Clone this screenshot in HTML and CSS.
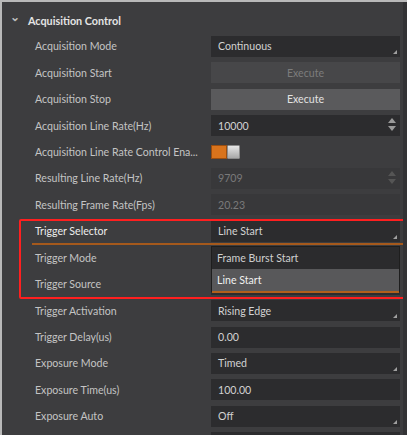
FILE: index.html
```
<!DOCTYPE html>
<html>
<head>
<meta charset="utf-8">
<link rel="stylesheet" href="styles.css">
</head>
<body>
<div class="panel">
  <div class="header"><span class="chev">&#8964;</span><span class="htext">Acquisition Control</span></div>
  <div class="rows">
    <div class="row"><span class="label">Acquisition Mode</span><div class="box combo">Continuous<span class="tri"></span></div></div>
    <div class="row"><span class="label">Acquisition Start</span><div class="btn disabled">Execute</div></div>
    <div class="row"><span class="label">Acquisition Stop</span><div class="btn">Execute</div></div>
    <div class="row"><span class="label">Acquisition Line Rate(Hz)</span><div class="box spin">10000<span class="arrows"><span class="up"></span><span class="down"></span></span></div></div>
    <div class="row"><span class="label">Acquisition Line Rate Control Ena...</span><div class="toggle"><span class="on"></span><span class="knob"></span></div></div>
    <div class="row"><span class="label">Resulting Line Rate(Hz)</span><div class="box spin dim">9709<span class="arrows"><span class="up"></span><span class="down"></span></span></div></div>
    <div class="row"><span class="label">Resulting Frame Rate(Fps)</span><div class="box dim">20.23</div></div>
    <div class="row selected"><span class="label">Trigger Selector</span><div class="box combo">Line Start<span class="tri"></span></div></div>
    <div class="row"><span class="label">Trigger Mode</span><div class="box combo"><span class="tri"></span></div></div>
    <div class="row"><span class="label">Trigger Source</span><div class="box combo"><span class="tri"></span></div></div>
    <div class="row"><span class="label">Trigger Activation</span><div class="box combo">Rising Edge<span class="tri"></span></div></div>
    <div class="row"><span class="label">Trigger Delay(us)</span><div class="box">0.00</div></div>
    <div class="row"><span class="label">Exposure Mode</span><div class="box combo">Timed<span class="tri"></span></div></div>
    <div class="row"><span class="label">Exposure Time(us)</span><div class="box">100.00</div></div>
    <div class="row"><span class="label">Exposure Auto</span><div class="box combo">Off<span class="tri"></span></div></div>
    <div class="row"><span class="label"></span><div class="box"></div></div>
  </div>
  <div class="dropdown">
    <div class="item">Frame Burst Start</div>
    <div class="item active">Line Start</div>
  </div>
  <div class="highlight"></div>
  <div class="scroll"></div>
</div>
</body>
</html>
```
FILE: styles.css
```
html, body { margin: 0; padding: 0; }
body { width: 407px; height: 435px; overflow: hidden; background: #3d3d3f; font-family: "Lato", "Open Sans", sans-serif; font-size: 10.6px; }
.panel { position: relative; width: 405px; height: 433px; background: #3d3d3f; border-left: 2px solid #b9b9b9; border-top: 2px solid #b9b9b9; overflow: hidden; }
.header { height: 26px; margin-top: 5px; display: flex; align-items: center; color: #e4e4e4; font-weight: bold; font-size: 10.8px; }
.chev { width: 26px; text-align: center; font-size: 12px; color: #bbb; line-height: 1; position: relative; top: -3px; }
.rows { display: flex; flex-direction: column; }
.row { height: 26.45px; display: flex; align-items: center; color: #c4c4c4; box-sizing: border-box; }
.label { width: 176px; padding-left: 33px; white-space: nowrap; overflow: hidden; }
.box { width: 189px; height: 21px; box-sizing: border-box; background: #2c2c2e; color: #d2d2d2; padding-left: 7px; display: flex; align-items: center; position: relative; }
.box.dim { background: #38383a; color: #7a7a7a; }
.tri { position: absolute; right: 3px; bottom: 3px; width: 0; height: 0; border-left: 4px solid transparent; border-bottom: 4px solid #a0a0a0; }
.arrows { position: absolute; right: 4px; top: 3px; display: flex; flex-direction: column; gap: 3px; }
.up { width: 0; height: 0; border-left: 4px solid transparent; border-right: 4px solid transparent; border-bottom: 5px solid #9a9a9a; }
.down { width: 0; height: 0; border-left: 4px solid transparent; border-right: 4px solid transparent; border-top: 5px solid #9a9a9a; }
.dim .up { border-bottom-color: #555; }
.dim .down { border-top-color: #555; }
.btn { width: 189px; height: 21px; background: #5a5a5c; color: #e2e2e2; display: flex; align-items: center; justify-content: center; }
.btn.disabled { background: #474749; color: #7c7c7c; }
.toggle { display: flex; height: 14px; }
.toggle .on { width: 16px; height: 14px; background: #d8731c; border: 1px solid #9a4e10; box-sizing: border-box; }
.toggle .knob { width: 13px; height: 14px; background: linear-gradient(#e6e6e6, #a8a8a8); border: 1px solid #8a8a8a; box-sizing: border-box; border-radius: 1px; }
.row.selected { color: #ececec; position: relative; }
.row.selected::after { content: ""; position: absolute; left: 30px; right: 0; bottom: 0; height: 2px; background: #a5591c; }
.dropdown { position: absolute; left: 209px; top: 244px; width: 189px; height: 46px; background: #2b2b2d; border: 1px solid #1e1e1e; box-sizing: border-box; }
.item { height: 22px; display: flex; align-items: center; padding-left: 5px; color: #cfcfcf; }
.item.active { background: #58585a; color: #f0f0f0; border-bottom: 2px solid #b0601c; }
.highlight { position: absolute; left: 17px; top: 217px; width: 386px; height: 80px; border: 2.5px solid #ff1f1f; box-sizing: border-box; border-radius: 2px; }
.scroll { position: absolute; right: 0; top: 0; width: 4px; height: 100%; background: #333335; }
```
